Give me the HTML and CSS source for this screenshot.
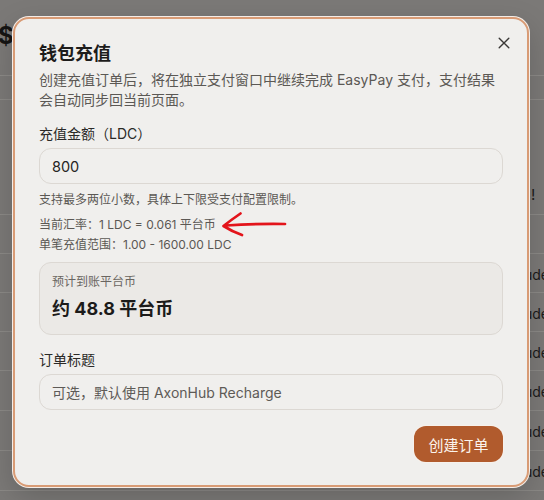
FILE: index.html
```html
<!DOCTYPE html>
<html lang="zh-CN">
<head>
<meta charset="utf-8">
<title>钱包充值</title>
<link rel="stylesheet" href="styles.css">
</head>
<body>
<div class="page">
  <div class="stat"><span class="stat-value">$0</span></div>
  <div class="row row-thin"></div>
  <div class="row row-tall"><span class="cell-end cell-bang">!</span></div>
  <div class="row"></div>
  <div class="row"><span class="cell-end">ude</span></div>
  <div class="row"><span class="cell-end">ude</span></div>
  <div class="row"><span class="cell-end">ude</span></div>
  <div class="row row-wide"><span class="cell-end">ude</span></div>
  <div class="row row-wide"><span class="cell-end">ude</span></div>
  <div class="row row-wide"><span class="cell-end">ude</span></div>
</div>

<div class="dialog" role="dialog" aria-labelledby="dlg-title">
  <button class="close" aria-label="关闭">
    <svg viewBox="0 0 12 12" width="12" height="12"><path d="M1.2 1.2 L10.8 10.8 M10.8 1.2 L1.2 10.8" stroke="#3a3836" stroke-width="1.4" stroke-linecap="round" fill="none"/></svg>
  </button>
  <h2 class="title" id="dlg-title">钱包充值</h2>
  <p class="desc">创建充值订单后，将在独立支付窗口中继续完成 EasyPay 支付，支付结果会自动同步回当前页面。</p>

  <label class="label label-first">充值金额（LDC）</label>
  <div class="input"><span class="input-value">800</span></div>
  <p class="help help-first">支持最多两位小数，具体上下限受支付配置限制。</p>
  <p class="help help-second">当前汇率：1 LDC = 0.061 平台币</p>
  <p class="help">单笔充值范围：1.00 - 1600.00 LDC</p>

  <div class="estimate">
    <div class="estimate-label">预计到账平台币</div>
    <div class="estimate-value">约 48.8 平台币</div>
  </div>

  <label class="label label-second">订单标题</label>
  <div class="input"><span class="input-placeholder">可选，默认使用 AxonHub Recharge</span></div>

  <div class="actions">
    <button class="primary">创建订单</button>
  </div>
</div>

<svg class="annot" width="70" height="30" viewBox="220 210 70 30">
  <path d="M240.5 213.5 Q231 220 223.5 226 Q232 231.5 242 235 M226 225.5 Q256 223.5 285 224" stroke="#e3141b" stroke-width="2.7" stroke-linecap="round" stroke-linejoin="round" fill="none"/>
</svg>
</body>
</html>
```

FILE: styles.css
```css
* { box-sizing: border-box; }
html, body { margin: 0; padding: 0; }
body {
  width: 544px;
  height: 500px;
  overflow: hidden;
  background: #7b7977;
  font-family: Inter, "Noto Sans CJK SC", sans-serif;
  color: #2a2927;
  position: relative;
}

/* background page (under overlay) */
.page {
  display: flex;
  flex-direction: column;
}
.stat {
  height: 76px;
  border-bottom: 1px solid #8c8a87;
  padding-top: 22px;
}
.stat-value {
  font-size: 24px;
  font-weight: 700;
  color: #151413;
  line-height: 28px;
  margin-left: -2px;
}
.row {
  height: 39px;
  border-bottom: 1px solid #8b8986;
  display: flex;
  align-items: center;
  flex-shrink: 0;
}
.row-wide { height: 40px; }
.row-thin { height: 24px; }
.row-tall { height: 115px; align-items: flex-start; padding-top: 82px; }
.cell-end {
  margin-left: 524px;
  padding-top: 3px;
  font-size: 14px;
  color: #1c1b1a;
  line-height: 20px;
  white-space: nowrap;
}
.cell-bang { margin-left: 531px; font-size: 15px; }

/* dialog */
.dialog {
  position: absolute;
  left: 13px;
  top: 17px;
  width: 516px;
  height: 470px;
  background: #f0efed;
  border: 2px solid #d89b75;
  border-radius: 16px;
  box-shadow: 0 0 0 1px #f4ede8, 0 10px 30px rgba(0,0,0,0.18);
  padding: 21px 24px 22px 24px;
  display: flex;
  flex-direction: column;
}
.close {
  position: absolute;
  top: 16px;
  right: 15px;
  width: 16px;
  height: 16px;
  padding: 0;
  border: 0;
  background: transparent;
  display: flex;
  align-items: center;
  justify-content: center;
}
.title {
  margin: 0;
  font-size: 18px;
  font-weight: 700;
  line-height: 28px;
  color: #1d1c1b;
}
.desc {
  margin: 2px 0 0;
  font-size: 14px;
  line-height: 20px;
  color: #5b5854;
}
.label {
  display: block;
  font-size: 14px;
  line-height: 20px;
  color: #2b2a28;
}
.label-first { margin-top: 14px; }
.label-second { margin-top: 15px; }
.input {
  margin-top: 4px;
  height: 36px;
  flex-shrink: 0;
  border: 1px solid #dcd8d3;
  border-radius: 12px;
  background: #f0efed;
  display: flex;
  align-items: center;
  padding: 0 12px;
  font-size: 14px;
}
.input-value { color: #262523; font-size: 14.5px; }
.input-placeholder { color: #5e5b57; }
.help {
  margin: 0;
  font-size: 12px;
  line-height: 20px;
  color: #5b5854;
}
.help-first { margin-top: 6px; }
.help-second { margin-top: 5px; }
.estimate {
  margin-top: 7px;
  height: 73px;
  flex-shrink: 0;
  border: 1px solid #dcd8d3;
  border-radius: 12px;
  background: #ebe9e6;
  padding: 10px 12px 0;
}
.estimate-label {
  font-size: 12px;
  line-height: 18px;
  color: #6a6661;
}
.estimate-value {
  margin-top: 5px;
  font-size: 18px;
  line-height: 26px;
  font-weight: 700;
  color: #1c1b1a;
}
.actions {
  margin-top: 16px;
  display: flex;
  justify-content: flex-end;
}
.primary {
  height: 36px;
  width: 89px;
  border: 0;
  border-radius: 12px;
  background: #b15b2d;
  color: #fbf3ec;
  font-family: inherit;
  font-size: 15px;
  box-shadow: 0 0 0 1px #f7f1ec;
  padding: 0;
}

.annot {
  position: absolute;
  left: 220px;
  top: 210px;
}
```
